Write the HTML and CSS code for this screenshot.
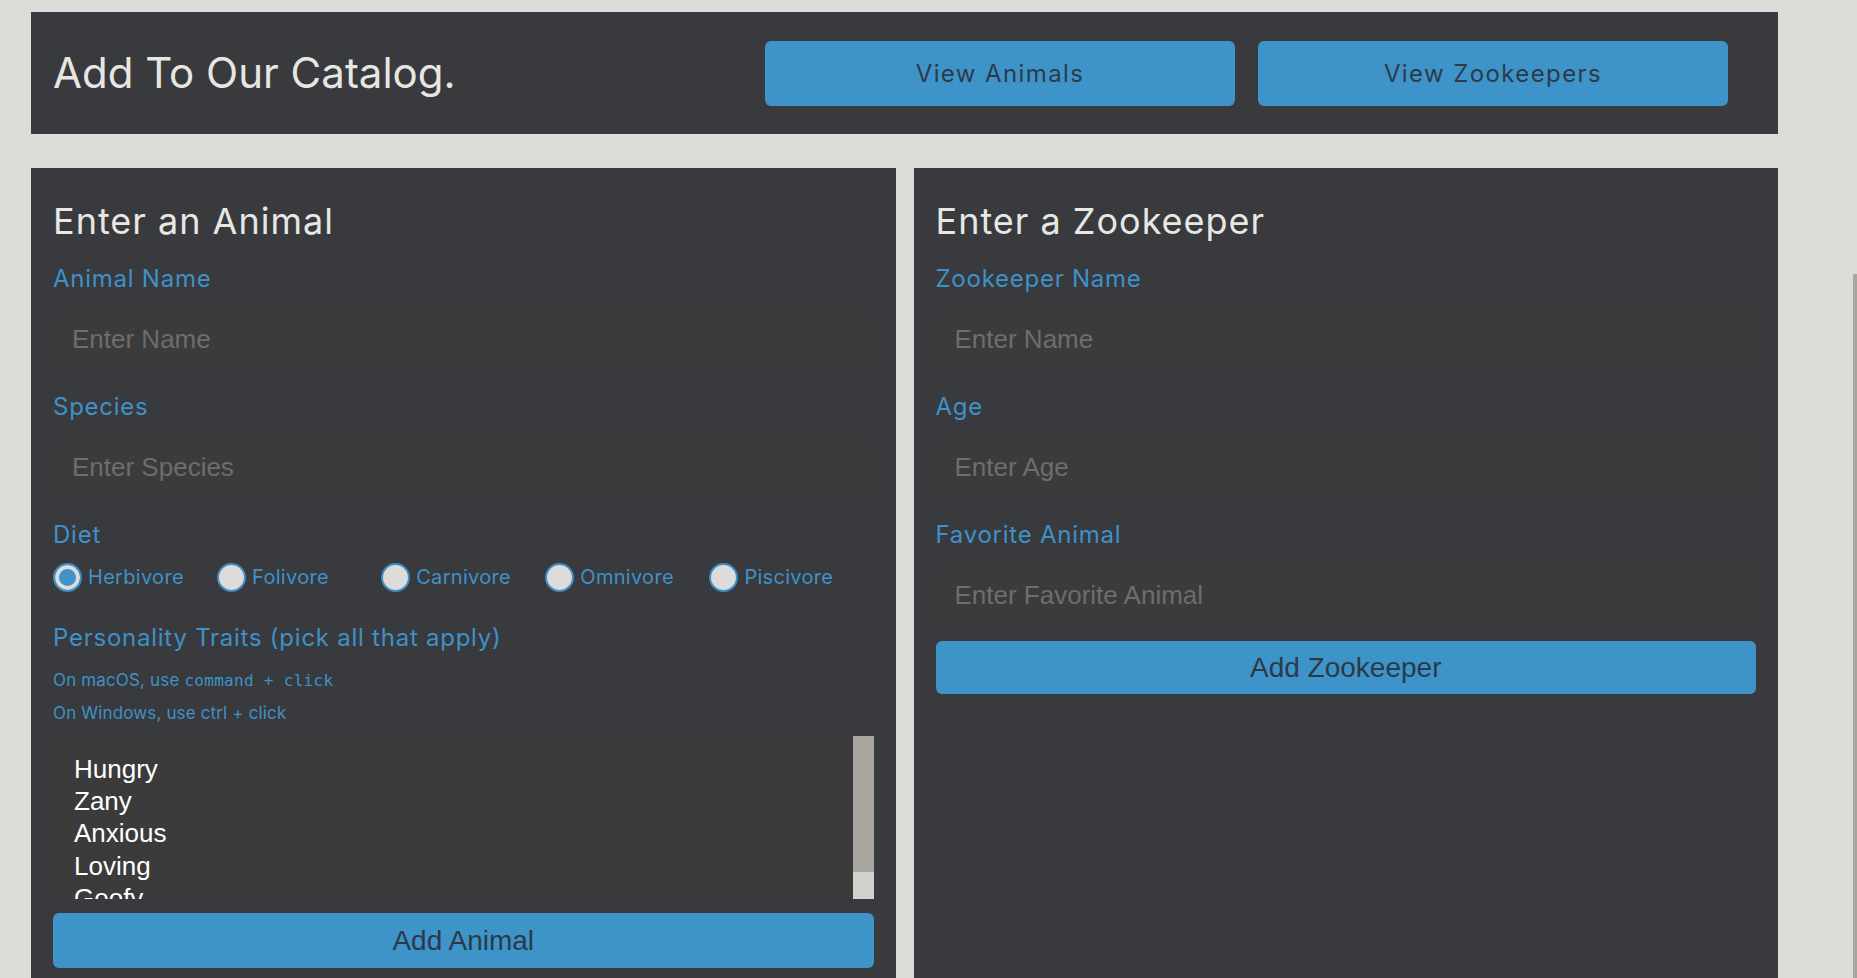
FILE: index.html
```html
<!DOCTYPE html>
<html lang="en">
<head>
<meta charset="utf-8">
<title>Add To Our Catalog</title>
<link rel="stylesheet" href="styles.css">
</head>
<body>
<div class="page">
  <header class="topbar">
    <h1 class="title">Add To Our Catalog.</h1>
    <nav class="nav">
      <a class="nav-btn" href="#">View Animals</a>
      <a class="nav-btn" href="#">View Zookeepers</a>
    </nav>
  </header>

  <main class="forms">
    <form class="card">
      <h2 class="card-title">Enter an Animal</h2>
      <label class="label" for="animal-name">Animal Name</label>
      <input class="input" id="animal-name" type="text" placeholder="Enter Name">
      <label class="label gap-top" for="species">Species</label>
      <input class="input" id="species" type="text" placeholder="Enter Species">
      <span class="label gap-top">Diet</span>
      <div class="radios">
        <label class="radio"><input type="radio" name="diet" checked><span>Herbivore</span></label>
        <label class="radio"><input type="radio" name="diet"><span>Folivore</span></label>
        <label class="radio"><input type="radio" name="diet"><span>Carnivore</span></label>
        <label class="radio"><input type="radio" name="diet"><span>Omnivore</span></label>
        <label class="radio"><input type="radio" name="diet"><span>Piscivore</span></label>
      </div>
      <label class="label traits" for="traits">Personality Traits (pick all that apply)</label>
      <p class="hint">On macOS, use <code class="kbd">command + click</code></p>
      <p class="hint hint-last">On Windows, use ctrl + click</p>
      <div class="list-box">
        <select class="list" id="traits" multiple>
          <option>Hungry</option>
          <option>Zany</option>
          <option>Anxious</option>
          <option>Loving</option>
          <option>Goofy</option>
        </select>
        <div class="list-scroll" aria-hidden="true"><div class="list-thumb"></div></div>
      </div>
      <button class="submit" type="button">Add Animal</button>
    </form>

    <form class="card">
      <h2 class="card-title">Enter a Zookeeper</h2>
      <label class="label" for="keeper-name">Zookeeper Name</label>
      <input class="input" id="keeper-name" type="text" placeholder="Enter Name">
      <label class="label gap-top" for="age">Age</label>
      <input class="input" id="age" type="text" placeholder="Enter Age">
      <label class="label gap-top" for="fav">Favorite Animal</label>
      <input class="input" id="fav" type="text" placeholder="Enter Favorite Animal">
      <button class="submit submit-keeper" type="button">Add Zookeeper</button>
    </form>
  </main>
</div>
<div class="page-scroll" aria-hidden="true"><div class="page-scroll-thumb"></div></div>
</body>
</html>
```

FILE: styles.css
```css
html, body {
  margin: 0;
  padding: 0;
  overflow: hidden;
}

body {
  background: #dcdbd7;
  font-family: Inter, "Open Sans", sans-serif;
  height: 978px;
}

.page {
  width: 1747px;
  margin: 12px 0 0 31px;
}

.topbar {
  background: #383a3d;
  height: 122px;
  box-sizing: border-box;
  padding: 0 50px 0 22px;
  display: flex;
  align-items: center;
}

.title {
  flex: 1;
  margin: 0;
  font-size: 42px;
  font-weight: 400;
  color: #e8e6e3;
  line-height: 50px;
}

.nav {
  display: flex;
  gap: 23px;
}

.nav-btn {
  width: 470px;
  height: 65px;
  border-radius: 6px;
  background: #3e94c9;
  color: #2d3b48;
  font-size: 24px;
  text-decoration: none;
  display: flex;
  align-items: center;
  justify-content: center;
  letter-spacing: 1.4px;
}

.forms {
  margin-top: 34px;
  display: grid;
  grid-template-columns: 1fr 1fr;
  gap: 18px;
}

.card {
  background: #383a3d;
  padding: 31px 22px 22px;
  display: flex;
  flex-direction: column;
  align-items: stretch;
  min-height: 800px;
  box-sizing: border-box;
}

.card-title {
  margin: 0 0 21px;
  font-size: 36px;
  line-height: 44px;
  font-weight: 400;
  color: #e9e7e4;
  letter-spacing: 1px;
}

.label {
  display: block;
  font-size: 24px;
  line-height: 29px;
  color: #3f91c8;
  margin-bottom: 18px;
  letter-spacing: 0.75px;
}

.gap-top {
  margin-top: 25px;
}

.input {
  height: 56px;
  box-sizing: border-box;
  border: none;
  outline: none;
  background: #3b3b3c;
  padding: 0 19px;
  font-family: "Liberation Sans", Arial, sans-serif;
  font-size: 26px;
  color: #ddd;
}

.input::placeholder {
  color: #6d6d6d;
}

.radios {
  display: grid;
  grid-template-columns: repeat(5, 1fr);
  margin-top: -5px;
  height: 30px;
}

.radio {
  display: flex;
  align-items: center;
  gap: 6px;
  font-size: 20px;
  color: #3f91c8;
  letter-spacing: 0.3px;
}

.radio input {
  appearance: none;
  -webkit-appearance: none;
  margin: 0;
  width: 29px;
  height: 29px;
  border-radius: 50%;
  border: 2px solid #3d8cc2;
  background: #dddcda;
  box-sizing: border-box;
  flex: none;
}

.radio input:checked {
  background: #3e94c9;
  box-shadow: inset 0 0 0 4px #dddcda;
}

.traits {
  margin-top: 31px;
  margin-bottom: 19px;
}

.hint {
  margin: 0 0 14px;
  font-size: 17px;
  line-height: 19px;
  color: #3f91c8;
  letter-spacing: 0.15px;
}

.hint-last {
  margin-bottom: 13px;
}

.kbd {
  font-family: "DejaVu Sans Mono", "Liberation Mono", monospace;
  font-size: 16px;
  letter-spacing: 0.3px;
}

.list-box {
  display: flex;
  height: 163px;
  background: #3b3b3c;
}

.list {
  flex: 1;
  min-width: 0;
  height: 100%;
  box-sizing: border-box;
  border: none;
  outline: none;
  background: transparent;
  overflow: hidden;
  scrollbar-width: none;
  padding: 17px 0 0 21px;
  font-family: "Liberation Sans", Arial, sans-serif;
  font-size: 26px;
  color: #ffffff;
}

.list option {
  padding: 1px 0 0;
  color: #ffffff;
}

.list-scroll {
  width: 21px;
  flex: none;
  background: #d3d1cd;
}

.list-thumb {
  height: 136px;
  background: #a9a59f;
}

.submit {
  margin-top: 14px;
  height: 55px;
  border: none;
  border-radius: 6px;
  background: #3e94c9;
  color: #2b3a48;
  font-family: "Liberation Sans", Arial, sans-serif;
  font-size: 28px;
}

.submit-keeper {
  margin-top: 18px;
  height: 53px;
}

.page-scroll {
  position: fixed;
  top: 0;
  right: 0;
  width: 4px;
  height: 978px;
  background: #dedcd8;
}

.page-scroll-thumb {
  margin-top: 274px;
  height: 704px;
  background: #a8a49e;
}
```
